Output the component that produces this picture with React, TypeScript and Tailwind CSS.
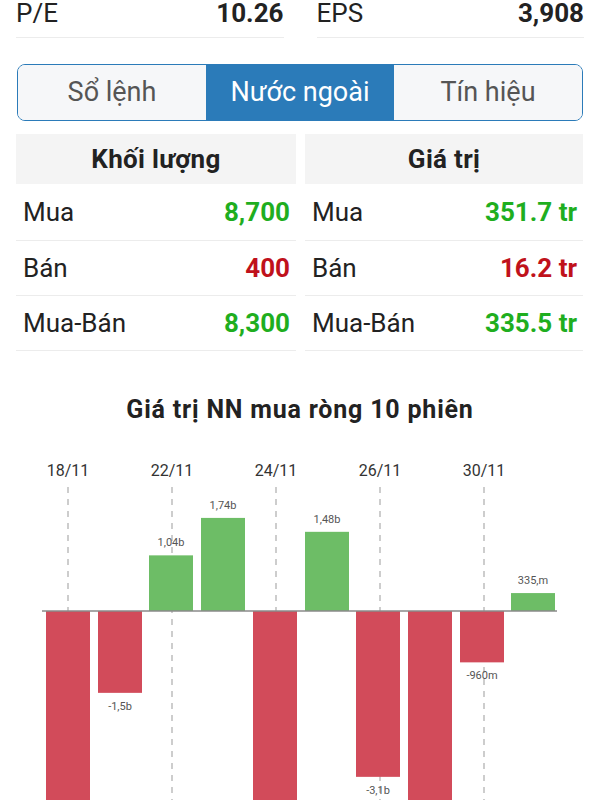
const STATS = [
  { label: 'P/E', value: '10.26' },
  { label: 'EPS', value: '3,908' },
];

const TABS = ['Sổ lệnh', 'Nước ngoài', 'Tín hiệu'];

const TABLES = [
  {
    title: 'Khối lượng',
    rows: [
      { label: 'Mua', value: '8,700', up: true },
      { label: 'Bán', value: '400', up: false },
      { label: 'Mua-Bán', value: '8,300', up: true },
    ],
  },
  {
    title: 'Giá trị',
    rows: [
      { label: 'Mua', value: '351.7 tr', up: true },
      { label: 'Bán', value: '16.2 tr', up: false },
      { label: 'Mua-Bán', value: '335.5 tr', up: true },
    ],
  },
];

// value in billions; bars extending off-screen have no visible label
const BARS = [
  { v: -4.5, label: '' },
  { v: -1.53, label: '-1,5b' },
  { v: 1.04, label: '1,04b' },
  { v: 1.74, label: '1,74b' },
  { v: -4.2, label: '' },
  { v: 1.48, label: '1,48b' },
  { v: -3.1, label: '-3,1b' },
  { v: -4.0, label: '' },
  { v: -0.96, label: '-960m' },
  { v: 0.335, label: '335,m' },
];

const DATES = ['18/11', '22/11', '24/11', '26/11', '30/11'];

const ZERO = 180;
const SCALE = 53.5;
const BAR_W = 44;
const barX = (i: number) => 46 + Math.round(i * 51.7);

function NetChart() {
  return (
    <svg width="600" height="370" viewBox="0 0 600 370" className="block">
      {DATES.map((d, i) => {
        const x = 68 + i * 104;
        return (
          <g key={d}>
            <text x={x} y={45} textAnchor="middle" fontSize="16" fill="#333" fontFamily="Roboto, sans-serif">
              {d}
            </text>
            <line x1={x} y1={56} x2={x} y2={370} stroke="#bdbdbd" strokeWidth="1.5" strokeDasharray="6 6" />
          </g>
        );
      })}
      {BARS.map((b, i) => {
        const h = Math.abs(b.v) * SCALE;
        const x = barX(i);
        const up = b.v > 0;
        return (
          <g key={i}>
            <rect x={x} y={up ? ZERO - h : ZERO} width={BAR_W} height={h} fill={up ? '#6dbd66' : '#d24b5a'} />
            {b.label && (
              <text
                x={x + BAR_W / 2}
                y={up ? ZERO - h - 9 : ZERO + h + 17}
                textAnchor="middle"
                fontSize="11"
                fill="#555"
                fontFamily="Roboto, sans-serif"
              >
                {b.label}
              </text>
            )}
          </g>
        );
      })}
      <line x1={42} y1={ZERO} x2={557} y2={ZERO} stroke="#8a8a8a" strokeWidth="1.5" />
    </svg>
  );
}

export default function App() {
  return (
    <div className="w-[600px] h-[800px] overflow-hidden bg-white font-['Roboto',sans-serif] text-[#222]">
      <div className="px-4 grid grid-cols-2 gap-[33px]">
        {STATS.map((s) => (
          <div key={s.label} className="flex justify-between text-[26px] leading-[26px] pb-[11px] border-b border-[#ececec]">
            <span>{s.label}</span>
            <span className="font-bold">{s.value}</span>
          </div>
        ))}
      </div>

      <div className="mx-[17px] mt-[26px] flex h-[57px] rounded-lg border-[1.5px] border-[#2b7bb9] overflow-hidden">
        {TABS.map((t, i) => (
          <div
            key={t}
            className={
              i === 1
                ? 'flex-1 flex items-center justify-center text-[27px] bg-[#2b7bb9] text-white'
                : 'flex-1 flex items-center justify-center text-[27px] bg-[#f6f7f9] text-[#555]'
            }
          >
            {t}
          </div>
        ))}
      </div>

      <div className="px-4 mt-[13px] grid grid-cols-[280px_278px] gap-[9px]">
        {TABLES.map((tb) => (
          <div key={tb.title}>
            <div className="h-[50px] bg-[#f4f4f4] flex items-center justify-center text-[26px] tracking-[0.3px] font-bold">
              {tb.title}
            </div>
            {tb.rows.map((r, i) => (
              <div
                key={r.label}
                className={
                  'flex items-center justify-between pl-[7px] pr-[6px] border-b border-[#ececec] text-[26px] ' +
                  (i === 0 ? 'h-[57px]' : 'h-[55px]')
                }
              >
                <span>{r.label}</span>
                <span className={r.up ? 'font-bold text-[#1fae1f]' : 'font-bold text-[#c0111b]'}>{r.value}</span>
              </div>
            ))}
          </div>
        ))}
      </div>

      <div className="mt-[44px] text-center text-[25px] leading-[30px] tracking-[0.8px] font-bold">
        Giá trị NN mua ròng 10 phiên
      </div>
      <div className="mt-[6px]">
        <NetChart />
      </div>
    </div>
  );
}
